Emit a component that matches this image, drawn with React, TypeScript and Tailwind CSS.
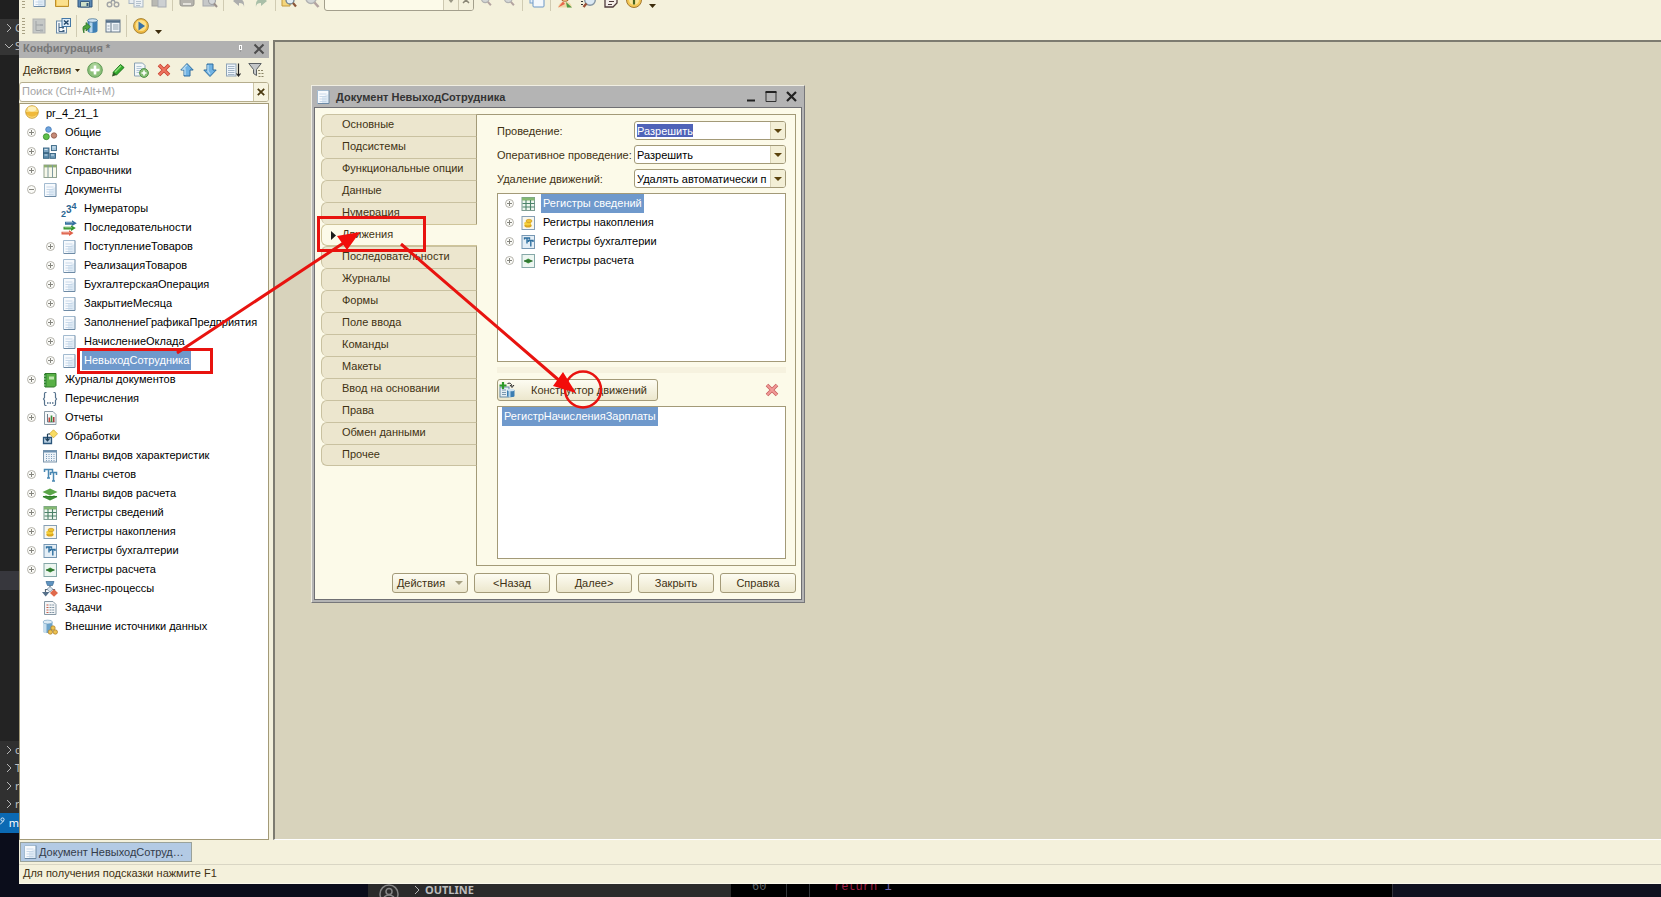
import type { ReactNode } from "react";

/* ---------- icons ---------- */

type IconProps = { children: ReactNode; size?: "sm" | "md" };

function Svg({ children, size = "md" }: IconProps) {
  return (
    <svg viewBox="0 0 16 16" aria-hidden="true" className={size === "sm" ? "size-3 shrink-0" : "size-4 shrink-0"}>
      {children}
    </svg>
  );
}

const DocIcon = () => (
  <Svg>
    <rect x="2" y="1.5" width="12" height="13" fill="#f7fafd" />
    <path d="M7 14V8l6.500-3v9z" fill="#dde9f4" />
    <path d="M4.500 5h7M4.500 7.500h7M4.500 10h7M4.500 12.500h7" stroke="#c3d5e6" strokeWidth=".900" />
    <path d="M2.500 14V1.500h11.500" fill="none" stroke="#a3bbd0" />
    <path d="M2.500 14.500h11.500v-13" fill="none" stroke="#6d8aa5" />
  </Svg>
);

const ConfigIcon = () => (
  <Svg>
    <circle cx="8" cy="8" r="6.300" fill="#f0b93a" stroke="#c0952f" strokeWidth=".800" />
    <path d="M2 8a6 6 0 0 1 12 0z" fill="#f8d778" />
    <ellipse cx="8" cy="5" rx="4.200" ry="2.400" fill="#fdf0bb" />
    <path d="M3 10.500q5 4.500 10 0-1.500 3.300-5 3.300T3 10.500z" fill="#f9dc83" />
  </Svg>
);

const CommonIcon = () => (
  <Svg>
    <circle cx="6.500" cy="4.500" r="2.800" fill="#6fa3dc" stroke="#3f77b5" strokeWidth=".800" />
    <circle cx="4.300" cy="11.700" r="3" fill="#5fc04a" stroke="#35872a" strokeWidth=".800" />
    <circle cx="12" cy="10.500" r="2.700" fill="#c58a78" stroke="#8e5444" strokeWidth=".800" />
  </Svg>
);

const ConstIcon = () => (
  <Svg>
    <g stroke="#33607f" strokeWidth=".900">
      <rect x="1.500" y="4" width="5.500" height="4.600" fill="#7fa6c2" />
      <rect x="1.500" y="9.500" width="5.500" height="4.800" fill="#5b8bab" />
      <rect x="8" y="9.500" width="5.500" height="4.800" fill="#6d9ab8" />
      <rect x="9.400" y="1.600" width="5" height="5" fill="#a8c8dc" />
    </g>
    <path d="M2.500 5.500h3M2.500 11h3M9 11h3M10.500 3h3" stroke="#d3e4ef" />
  </Svg>
);

const CatalogIcon = () => (
  <Svg>
    <rect x="2" y="2" width="12.500" height="12.500" fill="#f7f8ea" stroke="#93a38f" />
    <path d="M2 3.200h12.500" stroke="#8fae6f" strokeWidth="2.400" />
    <path d="M6 2v12.500M10.500 2v12.500" stroke="#7e9aa0" />
  </Svg>
);

const NumeratorIcon = () => (
  <svg viewBox="0 0 16 16" aria-hidden="true" className="size-4 shrink-0 overflow-visible">
    <g fontFamily="Liberation Sans, sans-serif" fontWeight="700" fill="#2b6592">
      <text x="0" y="15.500" fontSize="9">2</text>
      <text x="5" y="12" fontSize="10">3</text>
      <text x="10.500" y="7.500" fontSize="9">4</text>
    </g>
  </svg>
);

const SequenceIcon = () => (
  <Svg>
    <path d="M4 1.700h7V.300l4.800 2.900L11 6.100V4.700H4z" fill="#35709f" />
    <path d="M2.500 6.700h7.500V5.200l4.800 2.900L10 11V9.500H2.500z" fill="#35982f" />
    <path d="M.500 11.700h7.500V10.200l4.500 2.900-4.500 2.900V14.500H.500z" fill="#df6048" />
    <path d="M5 2.700h7M3.500 7.700h7.500M1.500 12.700H9" stroke="#fff" strokeOpacity=".400" />
  </Svg>
);

const JournalIcon = () => (
  <Svg>
    <path d="M3 1.500h11v12l-1.500 1.500H3z" fill="#58b046" stroke="#317a2a" />
    <path d="M2 2h2.500v12.500H2z" fill="#2f8530" />
    <path d="M7 4.500h5v3H7z" fill="#bfe5ae" />
    <path d="M1.500 4h2M1.500 7h2M1.500 10h2M1.500 13h2" stroke="#d5e8d0" />
  </Svg>
);

const EnumIcon = () => (
  <Svg>
    <path d="M4.500 1.500H3.500Q2.500 1.500 2.500 3v3.500L1.500 8l1 1.500V13q0 1.500 1 1.500h1M11.500 1.500h1q1 0 1 1.500v3.500l1 1.500-1 1.500V13q0 1.500-1 1.500h-1" fill="none" stroke="#54718c" strokeWidth="1.200" />
    <path d="M5 12h1.500M7.500 12H9M10 12h1.500" stroke="#54718c" strokeWidth="1.400" />
  </Svg>
);

const ReportIcon = () => (
  <Svg>
    <path d="M2.500 1.500h8.500l3 3v10H2.500z" fill="#f6f8f8" stroke="#8a9ba6" />
    <path d="M5.500 4v8h7" fill="none" stroke="#6d7f8c" />
    <path d="M7.300 12V7.500" stroke="#c2493c" strokeWidth="1.600" />
    <path d="M9.500 12V5.500" stroke="#3b8c3a" strokeWidth="1.600" />
    <path d="M11.700 12V7" stroke="#a53b39" strokeWidth="1.600" />
  </Svg>
);

const ProcessingIcon = () => (
  <Svg>
    <path d="M11.500.800l4 4-4 4-4-4z" fill="#f8dc63" stroke="#cfa52e" strokeWidth=".800" />
    <path d="M1.500 8.500h8v6h-8z" fill="#b9d0e2" stroke="#2b567b" strokeWidth="1.300" />
    <path d="M5.500 5v6M3.500 9.500l2 2.300 2-2.300M5.500 5H8" fill="none" stroke="#1c3d59" strokeWidth="1.200" />
  </Svg>
);

const CharPlanIcon = () => (
  <Svg>
    <rect x="1.500" y="2.500" width="13" height="11.500" fill="#eef3f8" stroke="#7c95ab" />
    <path d="M1.500 3.500h13" stroke="#6d90b0" strokeWidth="2" />
    <path d="M4.500 6v7M7 6v7M9.500 6v7M12 6v7" stroke="#7b9bb9" strokeDasharray="1 1" />
  </Svg>
);

const AccountPlanIcon = () => (
  <Svg>
    <path d="M2.500 5V2.500h8V5M6.500 2.500V11M5 11h3M8.500 8V5.500h6V8M11.500 5.500V14M10 14h3" fill="none" stroke="#4a88b2" strokeWidth="1.500" />
  </Svg>
);

const CalcPlanIcon = () => (
  <Svg>
    <path d="M.500 11L8 7.500l7.500 3.500L8 14.500z" fill="#3c8d33" />
    <path d="M.500 8L8 5l7.500 3L8 11z" fill="#fff" />
    <path d="M.500 6L8 2.500 15.500 6 8 9.500z" fill="#5aa548" />
    <path d="M1 10.500h14" stroke="#2f7a2a" />
  </Svg>
);

const InfoRegIcon = () => (
  <Svg>
    <rect x="2" y="1.500" width="12.500" height="13" fill="#eff6f0" stroke="#7d9c92" />
    <path d="M2 3h12.500" stroke="#84b872" strokeWidth="3" />
    <path d="M6 4v10M10.500 4v10M2.500 7.500h12M2.500 11h12" stroke="#4b8269" strokeWidth="1.100" />
  </Svg>
);

const AccumRegIcon = () => (
  <Svg>
    <rect x="2" y="1.500" width="12.500" height="13" fill="#f8f7ee" stroke="#869fb6" />
    <ellipse cx="8" cy="10.500" rx="3.600" ry="2" fill="#dba51c" />
    <ellipse cx="7.600" cy="8.500" rx="3.400" ry="1.900" fill="#f3cf3b" />
    <ellipse cx="9" cy="6" rx="3" ry="1.700" fill="#efc331" stroke="#c48f1c" strokeWidth=".600" />
  </Svg>
);

const AccountRegIcon = () => (
  <Svg>
    <rect x="2" y="1.500" width="12.500" height="13" fill="#e4eef6" stroke="#7697b3" />
    <path d="M4.500 5.500V4h5v1.500M7 4v5.500M8.500 8V6.500h4.500V8M10.800 6.500V12.500" fill="none" stroke="#2e6f9f" strokeWidth="1.400" />
  </Svg>
);

const CalcRegIcon = () => (
  <Svg>
    <rect x="2" y="1.500" width="12.500" height="13" fill="#edf6f1" stroke="#86a8a8" />
    <path d="M3.800 8l4.400-2.500L12.700 8l-4.500 2.500z" fill="#3c8d3a" />
    <path d="M4 8h8.500" stroke="#27652b" />
  </Svg>
);

const BusinessIcon = () => (
  <Svg>
    <path d="M4 .500h8L10.500 4.500h-5z" fill="#5e93c0" stroke="#396a94" strokeWidth=".700" />
    <path d="M8 4.500v3M3.500 11.500V8.500h9v2" fill="none" stroke="#5a6975" strokeWidth="1.200" />
    <path d="M8 5.500l3 2.800-3 2.800-3-2.800z" fill="#d8e4ee" stroke="#6d8295" strokeWidth=".700" />
    <path d="M0 11h7.500L3.700 15.500z" fill="#55708a" />
    <path d="M12 8.200l4 3.800-4 3.800L8 12z" fill="#e0694b" />
  </Svg>
);

const TaskIcon = () => (
  <Svg>
    <path d="M2.500 1.500h8.500l3 3v10H2.500z" fill="#f4f6f7" stroke="#8799a6" />
    <path d="M4.500 5h2M4.500 7.500h2M4.500 10h2M4.500 12.500h2" stroke="#c95f4b" />
    <path d="M7.500 5h5M7.500 7.500h5M7.500 10h5M7.500 12.500h5" stroke="#8195a5" strokeDasharray="2 .700" />
  </Svg>
);

const ExternalIcon = () => (
  <Svg>
    <path d="M1 3v9.500c0 1.500 9 2.500 9.500 0V3z" fill="#6ba2c9" />
    <path d="M1 3v9.500c0 1 1.500 1.500 3.500 1.700V4z" fill="#c8deed" />
    <ellipse cx="5.700" cy="3" rx="4.700" ry="1.900" fill="#dcebf5" stroke="#6d9cbd" strokeWidth=".600" />
    <g fill="#edc250" stroke="#a77a24" strokeWidth=".700">
      <circle cx="11" cy="9" r="2.200" />
      <circle cx="8.300" cy="13" r="2.200" />
      <circle cx="13.300" cy="13" r="2.200" />
    </g>
  </Svg>
);

const Cross = ({ faded = false }: { faded?: boolean }) => (
  <Svg>
    <path d="M3 3l10 10M13 3L3 13" stroke={faded ? "#c9605f" : "#c63f2c"} strokeWidth="3.600" />
    <path d="M3.300 3.300l9.400 9.400M12.700 3.300l-9.400 9.400" stroke={faded ? "#f19a98" : "#ee7460"} strokeWidth="2" />
  </Svg>
);

const AddIcon = () => (
  <Svg>
    <circle cx="8" cy="8" r="7.300" fill="#8cc07a" stroke="#5e9a55" />
    <circle cx="8" cy="6" r="5" fill="#a7d196" />
    <path d="M8 3.500v9M3.500 8h9" stroke="#fff" strokeWidth="2.600" />
  </Svg>
);

const PencilIcon = () => (
  <Svg>
    <path d="M3 10.500L10.500 2.500l3.500 3L6.500 13z" fill="#35ad2d" stroke="#187218" />
    <path d="M5 10l6-6.300" stroke="#90e07c" strokeWidth="1.400" />
    <path d="M3 10.500L2 14.500l4.500-1.500z" fill="#2e5a25" />
  </Svg>
);

const AddDocIcon = () => (
  <Svg>
    <path d="M1.500 1h8l2.500 2.500V14H1.500z" fill="#f3f7f9" stroke="#8aa2b3" />
    <path d="M3.500 4.500h5M3.500 6.500h6M3.500 8.500h4M3.500 10.500h3" stroke="#b4c8d8" />
    <circle cx="11" cy="11" r="4.400" fill="#86bd74" stroke="#4f9248" />
    <path d="M11 8.500v5M8.500 11h5" stroke="#fff" strokeWidth="1.600" />
  </Svg>
);

const ArrowIcon = ({ down = false }: { down?: boolean }) => (
  <Svg>
    <path
      d={down ? "M8 14.500L1.800 8H5V2h6v6h3.200z" : "M8 1.500L1.800 8H5v6h6V8h3.200z"}
      fill="#6fb2e3"
      stroke="#2f6da0"
    />
    <path d={down ? "M6 3v6L8 12" : "M8 3L4 7h2v6"} fill="none" stroke="#b8dcf3" strokeWidth="1.300" />
  </Svg>
);

const SortIcon = () => (
  <Svg>
    <rect x="1.500" y="2" width="9.500" height="12" fill="#eef4fa" stroke="#8fa4b7" />
    <path d="M3 4.500h6.500M3 6.500h6.500M3 8.500h6.500M3 10.500h6.500M3 12.500h6.500" stroke="#8fa4b9" strokeWidth=".800" />
    <path d="M13.500 1.500V13M11.500 11.500l2 2.500 2-2.500" fill="none" stroke="#222" strokeWidth="1.200" />
  </Svg>
);

const FilterIcon = () => (
  <Svg>
    <path d="M.800 1.500h12.400L8.500 7.500V13.500L5.500 11.500V7.500z" fill="#c3c6c8" stroke="#5b6063" />
    <path d="M10 8.500h2M10.500 11.500h2M10.500 14.500h2M13 8.500h2M13.500 11.500h2M13.500 14.500h2" stroke="#8a8466" />
  </Svg>
);

const CaretIcon = () => (
  <svg viewBox="0 0 7 4" aria-hidden="true" className="block h-1 w-[7px] shrink-0">
    <path d="M0 0h7L3.500 4z" fill="#3c2c0c" />
  </svg>
);

/* main toolbar drawings */

const FolderIcon = () => (
  <Svg>
    <path d="M1.500 3h5l1.500 2h6.500v9.500h-13z" fill="#f3c85a" stroke="#bd8f2a" />
    <path d="M3 7h11v6.500H3z" fill="#fbe08c" />
  </Svg>
);
const SaveIcon = () => (
  <Svg>
    <path d="M1 1h14v14H1z" fill="#5c89b4" stroke="#2e557c" />
    <path d="M3.500 9.500h9V15h-9z" fill="#cfe0c8" stroke="#3b5f80" />
    <path d="M3.500 1h9v5.500h-9z" fill="#edf3f8" />
    <path d="M9.500 11h2v3h-2z" fill="#345a7d" />
  </Svg>
);
const CutIcon = () => (
  <Svg>
    <path d="M4 1l6 9M12 1L6 10" stroke="#9aa0a3" strokeWidth="1.500" />
    <circle cx="4.500" cy="12.500" r="2.300" fill="none" stroke="#a3a5a6" strokeWidth="1.400" />
    <circle cx="11.500" cy="12.500" r="2.300" fill="none" stroke="#a3a5a6" strokeWidth="1.400" />
  </Svg>
);
const CopyIcon = () => (
  <Svg>
    <rect x="1" y="1" width="9" height="10.500" fill="#e9edf0" stroke="#a9b7c4" />
    <rect x="6" y="5" width="9" height="10" fill="#edf1f4" stroke="#a9b7c4" />
    <path d="M8 9.500h5M8 11.500h5M8 13.500h4" stroke="#b4c1cd" />
  </Svg>
);
const PasteIcon = () => (
  <Svg>
    <rect x="1" y="1" width="12" height="13" fill="#b9b9b3" stroke="#a3a39f" />
    <rect x="7" y="5" width="8" height="10" fill="#cdd0d2" stroke="#a7acb2" />
  </Svg>
);
const PrintIcon = () => (
  <Svg>
    <rect x="4" y="1" width="8" height="6" fill="#ddd" stroke="#aaa" />
    <rect x="1" y="6" width="14" height="8" rx="2" fill="#b5b3ad" stroke="#979690" />
    <path d="M4 12h8" stroke="#e4e2dc" strokeWidth="2" />
  </Svg>
);
const PreviewIcon = () => (
  <Svg>
    <rect x="1" y="1" width="11" height="13" fill="#c6c8c8" stroke="#a5a8ab" />
    <circle cx="10" cy="9" r="3.500" fill="#d5d8da" stroke="#9b9c9e" />
    <path d="M12 11.500l3 3.500" stroke="#9a8f8a" strokeWidth="2" />
  </Svg>
);
const UndoIcon = ({ flip = false }: { flip?: boolean }) => (
  <Svg>
    <path
      d={flip ? "M14 9l-6 5v-3Q3 11 3 15q-1-8 5-8V4z" : "M2 9l6 5v-3q5 0 5 4 1-8-5-8V4z"}
      fill={flip ? "#a9bfa8" : "#adaead"}
    />
  </Svg>
);
const FindIcon = () => (
  <Svg>
    <path d="M1 1h8v13H1z" fill="#f5d67c" stroke="#c39a3d" />
    <circle cx="9" cy="8" r="4" fill="#e3eef4" stroke="#6e7f8b" strokeWidth="1.300" />
    <path d="M12 11l3 3.500" stroke="#8a5538" strokeWidth="2.200" />
  </Svg>
);
const LensIcon = ({ size }: { size?: "sm" | "md" }) => (
  <Svg size={size}>
    <circle cx="7" cy="6.500" r="5" fill="#d3d6d6" stroke="#b1b2b2" strokeWidth="1.500" />
    <path d="M10.500 10.500l4 4.500" stroke="#b3a3a0" strokeWidth="2.600" />
  </Svg>
);
const WindowsIcon = () => (
  <Svg>
    <rect x="1" y="1" width="10" height="10" fill="#e6f0f9" stroke="#7ba2cb" />
    <rect x="4" y="4" width="11" height="11" rx="1" fill="#f4f8fc" stroke="#6b97c6" />
  </Svg>
);
const PersonIcon = () => (
  <Svg>
    <circle cx="8" cy="5" r="4.500" fill="#f0bb7c" stroke="#a55f2f" />
    <path d="M1 15.500Q2 9.500 8 9.500t7 6z" fill="#f0d9a9" />
    <path d="M9 10l6 5.500H10z" fill="#4f9a44" />
    <path d="M1 15.500L6 9.500 8 12z" fill="#e8664c" />
  </Svg>
);
const SyntaxIcon = () => (
  <Svg>
    <circle cx="10" cy="8" r="5.300" fill="#dbe9f3" stroke="#8596a3" strokeWidth="1.400" />
    <path d="M6.500 11.500L3.500 15" stroke="#9a5038" strokeWidth="2.400" />
    <path d="M1 9.500h2M1 12.500h2" stroke="#333" />
  </Svg>
);
const NotesIcon = () => (
  <Svg>
    <path d="M5 1h9v10l-4 4H2V7z" fill="#f4eee9" stroke="#4e3b3b" strokeWidth="1.300" />
    <path d="M7 6.500h5M6 9.500h5M5 12.500h4" stroke="#4e3b3b" />
  </Svg>
);
const InfoIcon = () => (
  <Svg>
    <circle cx="8" cy="8" r="7.500" fill="#f4c753" stroke="#a37932" />
    <circle cx="8" cy="8" r="5" fill="#fbe699" />
    <path d="M8 6.500v6" stroke="#49631d" strokeWidth="2.200" />
  </Svg>
);
const TreeOffIcon = () => (
  <Svg>
    <rect x="2" y="1" width="12" height="14" fill="#c5c8c6" stroke="#b1b3b2" />
    <path d="M5 3v9.500h5M5 7h5" fill="none" stroke="#9fa3a5" />
    <path d="M9 6h3v2H9zM9 11.500h3v2H9z" fill="#a9adb0" />
  </Svg>
);
const TreeCloseIcon = () => (
  <Svg>
    <rect x="1.500" y="3" width="10" height="12" fill="#f4f8fb" stroke="#6b8ba8" />
    <path d="M4 5v8.500h4M4 9.500h4" fill="none" stroke="#3e5f7e" />
    <path d="M7.500 12h2v2h-2zM7 8.500h2v2H7z" fill="#3e5f7e" />
    <rect x="7" y=".500" width="8.500" height="8" fill="#dcebf7" stroke="#4478a6" />
    <path d="M9 2.500l4.500 4M13.500 2.500l-4.500 4" stroke="#1f4468" strokeWidth="1.500" />
  </Svg>
);
const DbIcon = () => (
  <Svg>
    <path d="M5.500 2.500v10.500c0 2.500 10 2.500 10 0V2.500z" fill="#3f7fb4" />
    <path d="M7.500 3v11.500h3V3z" fill="#b3d4ec" />
    <ellipse cx="10.500" cy="2.500" rx="5" ry="1.800" fill="#cfe2f1" stroke="#35688f" strokeWidth=".700" />
    <path d="M2 15Q-1 7.500 4 7.500V4.500L8.500 8.800 4 13v-2.500Q1.500 10.500 2 15z" fill="#4da33d" stroke="#256f22" strokeWidth=".700" />
  </Svg>
);
const PaneIcon = () => (
  <Svg>
    <rect x="1" y="2" width="14" height="12" fill="#eff4f8" stroke="#66798a" />
    <path d="M1 3.500h14" stroke="#56708a" strokeWidth="2.500" />
    <path d="M6 5v9" stroke="#66798a" />
    <path d="M8 7h5.500M8 9h5.500M8 11h5.500M2.500 8h2M2.500 11h2" stroke="#93a3b0" />
  </Svg>
);
const PlayIcon = () => (
  <Svg>
    <circle cx="8" cy="8" r="7.400" fill="#f2bb40" stroke="#a78437" />
    <circle cx="8" cy="7.500" r="5.500" fill="#fbe08a" />
    <path d="M5.500 3.500l6.500 4.500-6.500 4.500z" fill="#3671a8" />
  </Svg>
);
const WizardIcon = () => (
  <Svg>
    <rect x="1" y="5" width="9" height="10" fill="#e4edf3" stroke="#6789a3" />
    <path d="M3 8h4M3 10.500h4M3 12.500h4" stroke="#7b98b0" />
    <path d="M4 0v7M.500 3.500h7" stroke="#2c9a28" strokeWidth="2.200" />
    <path d="M8.500 1.500Q12 0 13 4M11 3l2 2.500L15 3" fill="none" stroke="#222" />
    <path d="M8 8v6c0 1.600 7.500 1.600 7.500 0V8z" fill="#3d7eb2" />
    <path d="M9.500 8v7h2V8z" fill="#b2d3ea" />
    <ellipse cx="11.800" cy="8" rx="3.700" ry="1.300" fill="#d0e3f1" />
  </Svg>
);

/* ---------- toolbar ---------- */

function Tool({ label, children }: { label: string; children: ReactNode }) {
  return (
    <button type="button" aria-label={label} className="flex shrink-0 items-center">
      {children}
    </button>
  );
}

const Grip = () => (
  <span className="h-4 w-[3px] shrink-0 bg-[repeating-linear-gradient(#a8a184_0_1px,transparent_1px_3px)]" />
);
const Sep = () => <span className="h-[22px] w-px shrink-0 bg-[#d0cbb2]" />;

function MainToolbars() {
  return (
    <div className="shrink-0 overflow-hidden bg-[#f4f1dc]">
      <div className="-mt-3 flex h-6 items-center pl-[3px]">
        <Grip />
        <div className="flex items-center gap-[7px] pr-[5px] pl-[6px]">
          <Tool label="Новый"><DocIcon /></Tool>
          <Tool label="Открыть"><FolderIcon /></Tool>
          <Tool label="Сохранить"><SaveIcon /></Tool>
        </div>
        <Sep />
        <div className="flex items-center gap-[7px] pr-[5px] pl-[6px]">
          <Tool label="Вырезать"><CutIcon /></Tool>
          <Tool label="Копировать"><CopyIcon /></Tool>
          <Tool label="Вставить"><PasteIcon /></Tool>
        </div>
        <Sep />
        <div className="flex items-center gap-[7px] pr-[5px] pl-[6px]">
          <Tool label="Печать"><PrintIcon /></Tool>
          <Tool label="Просмотр"><PreviewIcon /></Tool>
        </div>
        <Sep />
        <div className="flex items-center gap-[6px] pr-[6px] pl-[7px]">
          <Tool label="Отменить"><UndoIcon /></Tool>
          <Tool label="Вернуть"><UndoIcon flip /></Tool>
        </div>
        <Sep />
        <div className="flex items-center gap-[7px] pr-1 pl-[5px]">
          <Tool label="Найти в файлах"><FindIcon /></Tool>
          <Tool label="Найти"><LensIcon /></Tool>
        </div>
        <div className="flex h-[22px] w-[150px] shrink-0 overflow-hidden rounded-[3px] border border-[#a39f8c] bg-[#fcfae9]">
          <input aria-label="Строка поиска" className="min-w-0 flex-1 bg-transparent text-[11px] outline-none" />
          <button type="button" aria-label="Список" className="flex w-[15px] items-center justify-center border-l border-[#cdc8b0] bg-[#f4f1dc]">
            <svg viewBox="0 0 8 5" aria-hidden="true" className="h-[5px] w-2"><path d="M0 0h8L4 5z" fill="#9a9785" /></svg>
          </button>
          <button type="button" aria-label="Очистить строку" className="flex w-[15px] items-center justify-center border-l border-[#cdc8b0] bg-[#f4f1dc]">
            <svg viewBox="0 0 8 8" aria-hidden="true" className="size-2"><path d="M1 1l6 6M7 1L1 7" stroke="#8a8776" strokeWidth="1.500" /></svg>
          </button>
        </div>
        <div className="flex items-center gap-[11px] pr-[7px] pl-[6px]">
          <Tool label="Найти следующий"><LensIcon size="sm" /></Tool>
          <Tool label="Найти предыдущий"><LensIcon size="sm" /></Tool>
        </div>
        <Sep />
        <div className="pr-[5px] pl-[6px]"><Tool label="Окна"><WindowsIcon /></Tool></div>
        <Sep />
        <div className="flex items-center gap-[7px] pl-[6px]">
          <Tool label="Помощник"><PersonIcon /></Tool>
          <Tool label="Синтакс-помощник"><SyntaxIcon /></Tool>
          <Tool label="Шаблоны"><NotesIcon /></Tool>
          <Tool label="О программе"><InfoIcon /></Tool>
          <span className="self-end"><CaretIcon /></span>
        </div>
      </div>
      <div className="flex h-7 items-center pl-[3px]">
        <Grip />
        <div className="flex items-center gap-2 pr-[5px] pl-[6px]">
          <Tool label="Закрыть конфигурацию"><TreeOffIcon /></Tool>
          <Tool label="Открыть конфигурацию"><TreeCloseIcon /></Tool>
        </div>
        <Sep />
        <div className="flex items-center gap-[7px] px-[5px]">
          <Tool label="Обновить базу данных"><DbIcon /></Tool>
          <Tool label="Панель"><PaneIcon /></Tool>
        </div>
        <Sep />
        <div className="flex items-center gap-[6px] pl-[6px]">
          <Tool label="Начать отладку"><PlayIcon /></Tool>
          <span className="self-end"><CaretIcon /></span>
        </div>
      </div>
    </div>
  );
}

/* ---------- tree ---------- */

type Node = {
  label: string;
  icon: () => ReactNode;
  state?: "open" | "closed";
  selected?: boolean;
  children?: Node[];
};

function TreeRow({ node }: { node: Node }) {
  return (
    <div className="flex h-[19px] items-center">
      <span className="flex w-[22px] shrink-0 justify-center">
        {node.state && (
          <button type="button" aria-label={node.state === "open" ? "Свернуть" : "Развернуть"}>
            <svg viewBox="0 0 9 9" aria-hidden="true" className="block size-[9px]">
              <circle cx="4.500" cy="4.500" r="4" fill="#fbfbf8" stroke="#b4b3ac" />
              <path d={node.state === "open" ? "M2 4.500h5" : "M2 4.500h5M4.500 2v5"} stroke="#85857e" />
            </svg>
          </button>
        )}
      </span>
      <node.icon />
      <span
        className={
          node.selected
            ? "ml-[5px] bg-[#6f99cc] px-[2px] leading-[19px] whitespace-nowrap text-white"
            : "ml-[5px] px-[2px] leading-[19px] whitespace-nowrap text-black"
        }
      >
        {node.label}
      </span>
    </div>
  );
}

function Tree({ nodes, nested = false }: { nodes: Node[]; nested?: boolean }) {
  return (
    <ul className={nested ? "pl-[19px]" : ""}>
      {nodes.map((node) => (
        <li key={node.label}>
          <TreeRow node={node} />
          {node.children && <Tree nodes={node.children} nested />}
        </li>
      ))}
    </ul>
  );
}

const configuration: Node[] = [
  { label: "Общие", icon: CommonIcon, state: "closed" },
  { label: "Константы", icon: ConstIcon, state: "closed" },
  { label: "Справочники", icon: CatalogIcon, state: "closed" },
  {
    label: "Документы",
    icon: DocIcon,
    state: "open",
    children: [
      { label: "Нумераторы", icon: NumeratorIcon },
      { label: "Последовательности", icon: SequenceIcon },
      { label: "ПоступлениеТоваров", icon: DocIcon, state: "closed" },
      { label: "РеализацияТоваров", icon: DocIcon, state: "closed" },
      { label: "БухгалтерскаяОперация", icon: DocIcon, state: "closed" },
      { label: "ЗакрытиеМесяца", icon: DocIcon, state: "closed" },
      { label: "ЗаполнениеГрафикаПредприятия", icon: DocIcon, state: "closed" },
      { label: "НачислениеОклада", icon: DocIcon, state: "closed" },
      { label: "НевыходСотрудника", icon: DocIcon, state: "closed", selected: true },
    ],
  },
  { label: "Журналы документов", icon: JournalIcon, state: "closed" },
  { label: "Перечисления", icon: EnumIcon },
  { label: "Отчеты", icon: ReportIcon, state: "closed" },
  { label: "Обработки", icon: ProcessingIcon },
  { label: "Планы видов характеристик", icon: CharPlanIcon },
  { label: "Планы счетов", icon: AccountPlanIcon, state: "closed" },
  { label: "Планы видов расчета", icon: CalcPlanIcon, state: "closed" },
  { label: "Регистры сведений", icon: InfoRegIcon, state: "closed" },
  { label: "Регистры накопления", icon: AccumRegIcon, state: "closed" },
  { label: "Регистры бухгалтерии", icon: AccountRegIcon, state: "closed" },
  { label: "Регистры расчета", icon: CalcRegIcon, state: "closed" },
  { label: "Бизнес-процессы", icon: BusinessIcon },
  { label: "Задачи", icon: TaskIcon },
  { label: "Внешние источники данных", icon: ExternalIcon },
];

const registers: Node[] = [
  { label: "Регистры сведений", icon: InfoRegIcon, state: "closed", selected: true },
  { label: "Регистры накопления", icon: AccumRegIcon, state: "closed" },
  { label: "Регистры бухгалтерии", icon: AccountRegIcon, state: "closed" },
  { label: "Регистры расчета", icon: CalcRegIcon, state: "closed" },
];

function ConfigurationPanel() {
  return (
    <aside className="flex w-[250px] shrink-0 flex-col pt-px">
      <header className="flex h-[17px] shrink-0 items-start bg-[#b1b1b1] pr-1 pl-1 font-bold text-[#777]">
        <h2 className="flex-1 leading-[14px]">Конфигурация *</h2>
        <button type="button" aria-label="Закрепить" className="mt-[3px] mr-[10px]">
          <svg viewBox="0 0 5 8" aria-hidden="true" className="block h-2 w-[5px]">
            <path d="M1 1h3v5H1z" fill="#fff" />
            <path d="M2.500 6v2M2.500 2v3" stroke="#999" />
          </svg>
        </button>
        <button type="button" aria-label="Закрыть панель" className="mt-[2px]">
          <svg viewBox="0 0 12 12" aria-hidden="true" className="block size-3">
            <path d="M1.500 1.500l9 9M10.500 1.500l-9 9" stroke="#4d4d4d" strokeWidth="2" />
          </svg>
        </button>
      </header>
      <div className="flex h-6 shrink-0 items-center justify-between pr-[5px] pl-1">
        <button type="button" className="flex items-center gap-1 text-[#3f3213]">
          Действия
          <svg viewBox="0 0 5 3" aria-hidden="true" className="h-[3px] w-[5px]"><path d="M0 0h5L2.500 3z" fill="#3c2c0c" /></svg>
        </button>
        <Tool label="Добавить"><AddIcon /></Tool>
        <Tool label="Изменить"><PencilIcon /></Tool>
        <Tool label="Добавить копированием"><AddDocIcon /></Tool>
        <Tool label="Удалить"><Cross /></Tool>
        <Tool label="Вверх"><ArrowIcon /></Tool>
        <Tool label="Вниз"><ArrowIcon down /></Tool>
        <Tool label="Сортировать"><SortIcon /></Tool>
        <Tool label="Отбор"><FilterIcon /></Tool>
      </div>
      <div className="flex h-5 shrink-0 overflow-hidden rounded-[3px] border border-[#b5ad8d] bg-white">
        <input
          type="search"
          aria-label="Поиск по конфигурации"
          placeholder="Поиск (Ctrl+Alt+M)"
          className="min-w-0 flex-1 pb-[2px] pl-[2px] text-[11px] outline-none placeholder:text-[#a5a5a5]"
        />
        <button type="button" aria-label="Очистить" className="flex w-[15px] items-center justify-center border-l border-[#cdc6a6] bg-[#f7f4e0]">
          <svg viewBox="0 0 8 8" aria-hidden="true" className="size-2">
            <path d="M.800.800l6.400 6.400M7.200.800L.800 7.200" stroke="#4b3a10" strokeWidth="1.800" />
          </svg>
        </button>
      </div>
      <div className="mt-px min-h-0 flex-1 overflow-hidden border border-[#a39a78] bg-white">
        <div className="flex h-[19px] items-start pl-1">
          <ConfigIcon />
          <span className="ml-[5px] px-px leading-[18px] text-black">pr_4_21_1</span>
        </div>
        <Tree nodes={configuration} />
      </div>
    </aside>
  );
}

/* ---------- document editor ---------- */

const tabs = [
  "Основные", "Подсистемы", "Функциональные опции", "Данные", "Нумерация", "Движения",
  "Последовательности", "Журналы", "Формы", "Поле ввода", "Команды", "Макеты",
  "Ввод на основании", "Права", "Обмен данными", "Прочее",
];

function Tabs() {
  return (
    <nav role="tablist" aria-label="Разделы" className="z-10 -mr-px flex w-[156px] shrink-0 flex-col self-start">
      {tabs.map((tab) =>
        tab === "Движения" ? (
          <button
            key={tab}
            type="button"
            role="tab"
            aria-selected
            className="flex h-[22px] items-start rounded-l-[6px] border-y border-l border-[#cfc59a] bg-[#fcfae9] pl-[9px] text-left leading-[19px]"
          >
            <svg viewBox="0 0 5 9" aria-hidden="true" className="mt-[6px] mr-[6px] h-[9px] w-[5px]"><path d="M0 0l5 4.500L0 9z" fill="#1b1b1b" /></svg>
            {tab}
          </button>
        ) : (
          <button
            key={tab}
            type="button"
            role="tab"
            aria-selected={false}
            className="flex h-[22px] items-start rounded-l-[6px] border-t border-r border-l border-t-[#c9c1a0] border-r-[#a39a78] border-l-[#c9c1a0] bg-[#ece6ce] pl-5 text-left leading-[19px] last:border-b last:border-b-[#c9c1a0]"
          >
            {tab}
          </button>
        ),
      )}
    </nav>
  );
}

function Field({ id, label, value, highlighted = false }: { id: string; label: string; value: string; highlighted?: boolean }) {
  return (
    <div className="flex h-[19px] items-center">
      <label htmlFor={id} className="w-[137px] shrink-0 whitespace-nowrap">{label}</label>
      <div className="grid min-w-0 flex-1 grid-cols-[1fr_15px] overflow-hidden rounded-[3px] border border-[#a39a78] bg-white">
        <select
          id={id}
          defaultValue={value}
          className={
            highlighted
              ? "col-span-full row-start-1 h-[17px] min-w-0 appearance-none bg-[linear-gradient(#4f63b8,#4f63b8)] bg-[length:56px_13px] bg-[position:2px_2px] bg-no-repeat pr-4 pl-[2px] text-white outline-none"
              : "col-span-full row-start-1 h-[17px] min-w-0 appearance-none pr-4 pl-[2px] text-black outline-none"
          }
        >
          <option>{value}</option>
        </select>
        <span className="pointer-events-none col-start-2 row-start-1 flex items-center justify-center border-l border-[#d8d2b6] bg-[#f3efd6]">
          <svg viewBox="0 0 8 4" aria-hidden="true" className="h-1 w-2"><path d="M0 0h8L4 4z" fill="#5b430c" /></svg>
        </span>
      </div>
    </div>
  );
}

const buttonClass =
  "flex h-5 w-[76px] items-center justify-center rounded-[3px] border border-[#a39a78] bg-linear-to-b from-[#fdfcf2] to-[#ece7cd] text-[#3f3213]";

function DocumentWindow() {
  return (
    <section
      aria-label="Документ НевыходСотрудника"
      className="absolute top-[43px] left-9 flex w-[494px] flex-col border border-[#f0eee2] border-r-[#77777a] border-b-[#77777a] bg-[#b4b4b4] px-[2px] pb-[2px]"
    >
      <header className="flex h-[21px] items-center gap-[5px] pr-[5px] pl-px">
        <DocIcon />
        <h1 className="flex-1 font-bold text-[#333]">Документ НевыходСотрудника</h1>
        <div className="flex items-center gap-[9px]">
          <button type="button" aria-label="Свернуть окно">
            <svg viewBox="0 0 10 11" aria-hidden="true" className="block h-[11px] w-[10px]"><path d="M1 9.500h8" stroke="#222" strokeWidth="2" /></svg>
          </button>
          <button type="button" aria-label="Развернуть окно">
            <svg viewBox="0 0 12 11" aria-hidden="true" className="block h-[11px] w-3"><path d="M1 1h10v9.500H1z" fill="none" stroke="#333" /><path d="M.500 1h11" stroke="#222" strokeWidth="2" /></svg>
          </button>
          <button type="button" aria-label="Закрыть окно">
            <svg viewBox="0 0 11 11" aria-hidden="true" className="block size-[11px]"><path d="M1 1l9 9M10 1l-9 9" stroke="#222" strokeWidth="2.200" /></svg>
          </button>
        </div>
      </header>
      <div className="border border-[#6f6f73] bg-[#fcfae9] pt-[6px] pr-[5px] pb-[6px] pl-[6px] text-[#3f3213]">
        <div className="flex">
          <Tabs />
          <div className="flex min-w-0 flex-1 flex-col border border-[#a39a78] pt-[6px] pr-[9px] pb-[6px] pl-5">
            <div className="flex flex-col gap-[5px]">
              <Field id="posting" label="Проведение:" value="Разрешить" highlighted />
              <Field id="realtime" label="Оперативное проведение:" value="Разрешить" />
              <Field id="removal" label="Удаление движений:" value="Удалять автоматически п" />
            </div>
            <div className="mt-[5px] h-[169px] border border-[#a39a78] bg-white">
              <Tree nodes={registers} />
            </div>
            <div className="mt-[5px] h-[6px] bg-[#f6f2df]" />
            <div className="mt-[6px] flex items-center justify-between pr-[6px]">
              <button
                type="button"
                className="flex h-[22px] w-[161px] items-center rounded-[3px] border border-[#a39a78] bg-linear-to-b from-[#fdfcf2] to-[#ece7cd] pb-px pl-px"
              >
                <WizardIcon />
                <span className="flex-1 pl-[6px] text-center">Конструктор движений</span>
              </button>
              <button type="button" aria-label="Удалить движение"><Cross faded /></button>
            </div>
            <div className="mt-[5px] h-[153px] border border-[#a39a78] bg-white pl-1">
              <span className="inline-block bg-[#6f99cc] px-[2px] leading-[19px] text-white">РегистрНачисленияЗарплаты</span>
            </div>
          </div>
        </div>
        <div className="mt-[7px] flex justify-end gap-[6px]">
          <button type="button" className={buttonClass}>
            <span className="mr-[10px]">Действия</span>
            <svg viewBox="0 0 8 4" aria-hidden="true" className="h-1 w-2"><path d="M0 0h8L4 4z" fill="#a8a283" /></svg>
          </button>
          <button type="button" className={buttonClass}>&lt;Назад</button>
          <button type="button" className={buttonClass}>Далее&gt;</button>
          <button type="button" className={buttonClass}>Закрыть</button>
          <button type="button" className={buttonClass}>Справка</button>
        </div>
      </div>
    </section>
  );
}

/* ---------- code editor visible behind the window ---------- */

function SideRow({ letter, open = false }: { letter: string; open?: boolean }) {
  return (
    <div className="flex h-[18px] items-center gap-[2px] pl-[5px] font-['Noto_Sans',sans-serif] text-[11px] text-[#c0c0c0]">
      <svg viewBox="0 0 8 8" aria-hidden="true" className="size-2 shrink-0">
        <path d={open ? "M0 2l4 4 4-4" : "M2 0l4 4-4 4"} fill="none" stroke="#b5b5b5" />
      </svg>
      {letter}
    </div>
  );
}

function EditorEdge() {
  return (
    <div aria-hidden="true" className="flex w-[19px] shrink-0 flex-col overflow-hidden bg-[#0b0d1b]">
      <div className="h-[19px] shrink-0 bg-[#202020]" />
      <div className="shrink-0 bg-[#353535]">
        <SideRow letter="C" />
        <SideRow letter="S" open />
      </div>
      <div className="flex-1 bg-[#212121]" />
      <div className="h-[19px] shrink-0 bg-[#37373d]" />
      <div className="h-[151px] shrink-0 bg-[#232323]" />
      <div className="shrink-0 bg-[#303030]">
        <SideRow letter="c" />
        <SideRow letter="T" />
        <SideRow letter="r" />
        <SideRow letter="r" />
      </div>
      <div className="flex h-5 shrink-0 items-center justify-end overflow-hidden bg-[#0b69b3] font-['Noto_Sans',sans-serif] text-[11px] text-white">
        <svg viewBox="0 0 5 9" className="mr-1 mb-1 h-[9px] w-[5px] shrink-0">
          <circle cx="2.500" cy="2.500" r="1.600" fill="none" stroke="#dce9f5" />
          <path d="M3.500 4L0 7.500" stroke="#dce9f5" />
        </svg>
        m
      </div>
      <div className="h-[51px] shrink-0" />
    </div>
  );
}

function EditorBottom() {
  return (
    <div className="flex h-[13px] shrink-0 overflow-hidden bg-[#0b0d1b]">
      <div className="w-[368px] shrink-0" />
      <div className="flex w-[363px] shrink-0 items-start bg-[#2b2b2b] pl-[11px] font-['Noto_Sans',sans-serif] text-[11px] leading-3 font-bold text-[#bcbcbc]">
        <svg viewBox="0 0 20 13" aria-hidden="true" className="mr-[6px] h-[13px] w-5 shrink-0">
          <g fill="none" stroke="#858585" strokeWidth="1.500">
            <circle cx="10" cy="10" r="9" />
            <circle cx="10" cy="7.500" r="3" />
            <path d="M5 13q5-4 10 0" />
          </g>
        </svg>
        <svg viewBox="0 0 8 8" aria-hidden="true" className="mt-[2px] mr-1 ml-2 size-2 shrink-0">
          <path d="M2 0l4 4-4 4" fill="none" stroke="#b5b5b5" />
        </svg>
        OUTLINE
      </div>
      <div className="flex w-[662px] shrink-0 items-start overflow-hidden border-r border-[#33343c] bg-black font-['Liberation_Mono',monospace] text-[12px] leading-[6px]">
        <span className="w-[55px] pl-[21px] text-[#5f6468]">60</span>
        <span className="h-full w-6 border-x border-[#33363a]" />
        <span className="pl-6 whitespace-pre text-[#a01f45]">return <span className="text-[#6a63b0]">1</span></span>
      </div>
      <div className="flex-1 bg-[#101220]" />
    </div>
  );
}

/* ---------- annotations drawn over the screen ---------- */

function Annotations() {
  return (
    <svg aria-hidden="true" className="pointer-events-none absolute inset-0 z-20 size-full">
      <g fill="none" stroke="#e8130f" strokeWidth="3">
        <rect x="78.500" y="349.500" width="133" height="23" />
        <rect x="318.500" y="217.500" width="106" height="33" />
        <path d="M177 353L345 242M401 244l160 138" />
        <circle cx="583" cy="389.500" r="18" strokeWidth="2.500" />
      </g>
      <path d="M360 232l-23 4 10 14zM576 393l-23-7 10-14z" fill="#f20d0a" />
    </svg>
  );
}

export default function App() {
  return (
    <div className="relative flex h-screen flex-col overflow-hidden bg-[#0b0d1b] font-['Liberation_Sans',Arial,sans-serif] text-[11px] leading-[14px]">
      <div className="flex min-h-0 flex-1">
        <EditorEdge />
        <div className="flex min-w-0 flex-1 flex-col border-b border-[#fbf9ec] bg-[#f4f1dc]">
          <MainToolbars />
          <div className="flex min-h-0 flex-1 gap-1">
            <ConfigurationPanel />
            <main className="relative min-w-0 flex-1 overflow-hidden border-t-2 border-b border-l-2 border-t-[#7d7b70] border-b-white border-l-[#7d7b70] bg-[#d8d3bc]">
              <DocumentWindow />
            </main>
          </div>
          <div className="shrink-0 pt-[2px] pb-[2px] pl-px">
            <button type="button" className="flex h-5 w-[172px] items-center gap-px border border-[#9aa29a] bg-[#b3cae4] pl-px text-[#333c4a]">
              <DocIcon />
              Документ НевыходСотруд…
            </button>
          </div>
          <footer className="h-[19px] shrink-0 border-t border-[#d9d6c4] pl-1 leading-[17px] text-[#3f3213]">
            Для получения подсказки нажмите F1
          </footer>
        </div>
      </div>
      <EditorBottom />
      <Annotations />
    </div>
  );
}
